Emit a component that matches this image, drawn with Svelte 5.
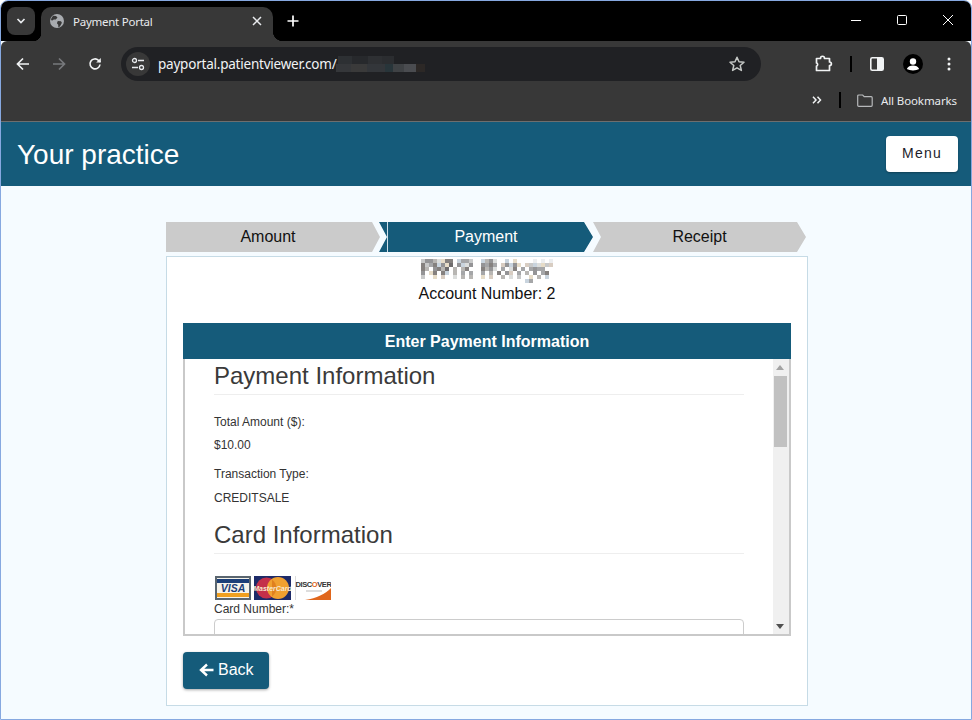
<script>
  const steps = [
    { label: 'Amount', cls: 'first' },
    { label: 'Payment', cls: 'mid on' },
    { label: 'Receipt', cls: 'last' }
  ];
  const urlBlur = [
    [2, 4, 14, 8, '#2d3033'], [16, 4, 16, 8, '#27292c'], [32, 4, 14, 8, '#2e3033'], [46, 4, 12, 8, '#2b2d30'],
    [0, 12, 15, 8, '#35373a'], [15, 12, 16, 8, '#3a3a3a'], [31, 12, 18, 8, '#33363a'], [49, 12, 8, 8, '#28353a'],
    [57, 12, 11, 8, '#3f4245'], [68, 12, 12, 8, '#4a4c50'], [80, 12, 9, 8, '#2c2826']
  ];
  const greys = { '1': '#eceef0', '2': '#dcdedd', '3': '#c8c9c9', '4': '#b8b6b3', '5': '#a5a6a8', '6': '#949496', '7': '#85817f', '8': '#6f6d6e' };
  const tints = ['', '#e6dcc8', '', '#c9d4de', '', '#d8cdc2'];
  const rows = [
    '36642377 3553  3462  2 2    1 1 1',
    '73573628 6226  6575 36363 2332232',
    '74 6748 4 47   7462 5 27 5 5655  ',
    '6 37 73 4 5 5  5 4 7 62 5 4 6 57 ',
    '3  3 2  2 4 4  3 2  4 2 3  2 4 2 ',
    '                          25      '
  ];
  const nameCells = [];
  rows.forEach((row, y) => {
    [...row].forEach((c, x) => {
      if (greys[c]) {
        const t = tints[(x * 5 + y * 7) % tints.length];
        nameCells.push({ x: x * 4, y: y * 4, fill: t && Number(c) < 4 ? t : greys[c] });
      }
    });
  });
</script>

<div class="frame">
  <div class="tabstrip">
    <div class="tabsearch">
      <svg width="10" height="6" viewBox="0 0 10 6"><path d="M1.500 1l3.500 3.500L8.500 1" fill="none" stroke="#e8eaed" stroke-width="1.700"/></svg>
    </div>
    <div class="tab">
      <svg class="globe" width="14" height="14" viewBox="0 0 14 14"><circle cx="7" cy="7" r="7" fill="#a8abaf"/><path d="M3 1.800l3 .2 1.500 1.600-1.700 1.800-2 .1-1.900 1.300-1-1.500zM7.800 7l3.200.3.900 1.400-2 3.800-1.600.7-.1-2.500-1.300-1.500z" fill="#383838"/></svg>
      <span class="tabtitle">Payment Portal</span>
      <svg class="tabx" width="10" height="10" viewBox="0 0 10 10"><path d="M1 1l8 8M9 1l-8 8" stroke="#e8eaed" stroke-width="1.500"/></svg>
    </div>
    <svg class="newtab" width="12" height="12" viewBox="0 0 12 12"><path d="M6 .5v11M.5 6h11" stroke="#fff" stroke-width="1.700"/></svg>
    <div class="winctl">
      <svg width="12" height="12" viewBox="0 0 12 12"><path d="M1 6.500h10" stroke="#fff"/></svg>
      <svg width="12" height="12" viewBox="0 0 12 12"><rect x="1.500" y="1.500" width="9" height="9" rx="1" fill="none" stroke="#fff"/></svg>
      <svg width="12" height="12" viewBox="0 0 12 12"><path d="M1 1l10 10M11 1L1 11" stroke="#fff"/></svg>
    </div>
  </div>

  <div class="toolbar">
    <div class="navrow">
      <div class="navicons">
        <svg width="14" height="14" viewBox="0 0 14 14"><path d="M13 7H2M7 1.500L1.500 7 7 12.500" fill="none" stroke="#f1f3f4" stroke-width="1.700"/></svg>
        <svg width="14" height="14" viewBox="0 0 14 14"><path d="M1 7h11M7 1.500L12.500 7 7 12.500" fill="none" stroke="#77797c" stroke-width="1.700"/></svg>
        <svg width="14" height="14" viewBox="0 0 14 14"><path d="M12 7.500A5 5 0 1 1 10.500 3.300L12.300 5" fill="none" stroke="#f1f3f4" stroke-width="1.600"/><path d="M12.800 1v4.600H8.200z" fill="#f1f3f4"/></svg>
      </div>
      <div class="omnibox">
        <div class="siteinfo">
          <svg width="14" height="14" viewBox="0 0 14 14"><circle cx="3.500" cy="3.500" r="2" fill="none" stroke="#e8eaed" stroke-width="1.300"/><path d="M7 3.500h6M1 10.500h6" stroke="#e8eaed" stroke-width="1.400"/><circle cx="10.500" cy="10.500" r="2" fill="none" stroke="#e8eaed" stroke-width="1.300"/></svg>
        </div>
        <span class="url">payportal.patientviewer.com/</span>
        <svg class="urlblur" width="90" height="24" viewBox="0 0 90 24">
          {#each urlBlur as b}<rect x={b[0]} y={b[1]} width={b[2]} height={b[3]} fill={b[4]}/>{/each}
        </svg>
        <svg class="star" width="18" height="18" viewBox="0 0 18 18"><path d="M9 2.200l2 4.600 5 .4-3.800 3.300 1.200 4.900L9 12.800l-4.400 2.600 1.200-4.900L2 7.200l5-.4z" fill="none" stroke="#c4c7c5" stroke-width="1.500" stroke-linejoin="round"/></svg>
      </div>
      <div class="actions">
        <svg width="18" height="18" viewBox="0 0 18 18"><path d="M2 4h4c0-3 4-3 4 0h5v3.500c2.500 0 2.500 3.500 0 3.500v5H2v-4.500c1.500 0 1.500-3 0-3z" transform="translate(-.5 -.5)" fill="none" stroke="#f1f3f4" stroke-width="1.700" stroke-linejoin="round"/></svg>
        <span class="sep"></span>
        <svg width="14" height="14" viewBox="0 0 14 14"><rect x=".8" y=".8" width="12.400" height="12.400" rx="1.500" fill="none" stroke="#f1f3f4" stroke-width="1.600"/><rect x="7" y="1" width="6" height="12" fill="#f1f3f4"/></svg>
        <svg class="avatar" width="20" height="20" viewBox="0 0 20 20"><circle cx="10" cy="10" r="10" fill="#000"/><circle cx="10" cy="7.500" r="3.200" fill="#fff"/><path d="M3.800 15c1-2.600 3.600-3.600 6.200-3.600s5.200 1 6.200 3.600c-3 1.900-9.400 1.900-12.400 0z" fill="#fff"/></svg>
        <svg class="dots" width="4" height="14" viewBox="0 0 4 14"><circle cx="2" cy="2" r="1.500" fill="#f1f3f4"/><circle cx="2" cy="7" r="1.500" fill="#f1f3f4"/><circle cx="2" cy="12" r="1.500" fill="#f1f3f4"/></svg>
      </div>
    </div>
    <div class="bookrow">
      <svg width="10" height="8" viewBox="0 0 10 8"><path d="M1 .8L4 4 1 7.200M5.500 .8L8.500 4 5.500 7.200" fill="none" stroke="#f1f3f4" stroke-width="1.500"/></svg>
      <span class="booksep"></span>
      <svg class="folder" width="16" height="13" viewBox="0 0 16 13"><path d="M.7 2a1 1 0 0 1 1-1h4l1.500 1.700h7a1 1 0 0 1 1 1v7.600a1 1 0 0 1-1 1H1.700a1 1 0 0 1-1-1z" fill="none" stroke="#b6b8ba" stroke-width="1.200"/></svg>
      <span class="booktext">All Bookmarks</span>
    </div>
  </div>

  <header class="apphead">
    <h1>Your practice</h1>
    <button class="menu">Menu</button>
  </header>

  <main class="page">
    <div class="steps">
      {#each steps as s}
        <div class="step {s.cls}">{s.label}</div>
      {/each}
    </div>
    <section class="card">
      <svg class="name" width="134" height="24" viewBox="0 0 134 24">
        {#each nameCells as c}<rect x={c.x} y={c.y} width="4" height="4" fill={c.fill}/>{/each}
      </svg>
      <div class="acct">Account Number: 2</div>
      <div class="panelhead">Enter Payment Information</div>
      <div class="panel">
        <div class="scrollarea">
          <h2 class="h-first">Payment Information</h2>
          <div class="lbl l1">Total Amount ($):</div>
          <div class="val">$10.00</div>
          <div class="lbl l2">Transaction Type:</div>
          <div class="val v2">CREDITSALE</div>
          <h2 class="h-second">Card Information</h2>
          <div class="cards">
            <svg class="cvisa" width="36" height="24" viewBox="0 0 36 24">
              <rect width="36" height="24" fill="#5a6670"/><rect x="2" y="2" width="32" height="20" fill="#f6f3ea"/><rect x="2" y="3" width="32" height="4" fill="#1c3f78"/><rect x="2" y="17" width="32" height="4" fill="#f0a020"/>
              <text x="18" y="15.500" text-anchor="middle" class="visa">VISA</text>
            </svg>
            <svg width="37" height="24" viewBox="0 0 37 24">
              <rect width="37" height="24" fill="#1d2a68"/><circle cx="12.500" cy="12" r="10.500" fill="#c4304a"/><circle cx="24" cy="12" r="11" fill="#f0a030"/><path d="M18 3.500a10.500 10.500 0 0 1 0 17" fill="#e0801f"/>
              <text x="18.500" y="14.500" text-anchor="middle" class="mc">MasterCard</text>
            </svg>
            <svg class="disc" width="36" height="24" viewBox="0 0 36 24">
              <rect width="36" height="24" fill="#fff"/><path d="M36 12v12H10C22 22 30 18 36 12z" fill="#e0661c"/><path d="M.5 0v24" stroke="#ddd"/><path d="M11 15h16" stroke="#bbb"/>
              <text x="18.500" y="11" text-anchor="middle" class="dv">DISC<tspan fill="#e0661c">O</tspan>VER</text>
            </svg>
          </div>
          <div class="lbl l3">Card Number:*</div>
          <div class="field"></div>
        </div>
        <div class="sbar">
          <svg class="up" width="8" height="5" viewBox="0 0 8 5"><path d="M4 0l4 5H0z" fill="#a3a3a3"/></svg>
          <div class="thumb"></div>
          <svg class="down" width="8" height="5" viewBox="0 0 8 5"><path d="M0 0h8L4 5z" fill="#505050"/></svg>
        </div>
      </div>
      <button class="back">
        <svg width="15" height="14" viewBox="0 0 15 14"><path d="M14.500 7H2.500M8 1.500L2 7l6 5.500" fill="none" stroke="#fff" stroke-width="2.400"/></svg>
        Back
      </button>
    </section>
  </main>
</div>

<style>
  :global(body) { margin: 0; background: #fff; }
  .frame {
    width: 972px; height: 720px; box-sizing: border-box; overflow: hidden;
    border: 1px solid #86a8e0; border-radius: 8px 8px 0 0;
    display: flex; flex-direction: column; background: #f5fbff;
    font-family: "Liberation Sans", Arial, sans-serif;
  }
  .tabstrip { height: 40px; flex: none; background: #000; display: flex; align-items: flex-end; position: relative; }
  .tabsearch {
    width: 28px; height: 28px; border-radius: 8px; background: #383838; margin: 0 6px 6px 6px;
    display: flex; align-items: center; justify-content: center; flex: none;
  }
  .tab {
    width: 232px; height: 34px; background: #383838; border-radius: 10px 10px 0 0; flex: none;
    display: flex; align-items: center; box-sizing: border-box; padding: 0 11px 6px 9px; position: relative;
  }
  .tab::after {
    content: ""; position: absolute; right: -10px; bottom: 0; width: 10px; height: 10px;
    background: radial-gradient(circle at 100% 0, #000 10px, #383838 10.500px);
  }
  .tab::before {
    content: ""; position: absolute; left: -8px; bottom: 0; width: 8px; height: 8px;
    background: radial-gradient(circle at 0 0, #000 8px, #383838 8.500px);
  }
  .tabtitle { font: 11.500px/16px "Noto Sans", sans-serif; letter-spacing: -.25px; color: #e8eaed; margin: 1px 0 0 9px; flex: 1; }
  .newtab { margin: 0 0 14px 14px; flex: none; }
  .winctl { margin-left: auto; display: flex; gap: 34px; padding: 0 17px 15px 0; }
  .toolbar { height: 80px; flex: none; background: #383838; border-bottom: 1px solid #6e6e6e; display: flex; flex-direction: column; border-top-left-radius: 6px; border-top-right-radius: 6px; }
  .navrow { height: 46px; display: flex; align-items: flex-start; padding-top: 6px; box-sizing: border-box; }
  .navicons { display: flex; gap: 22px; align-items: center; height: 34px; padding-left: 15px; width: 105px; box-sizing: border-box; flex: none; margin-right: 15px; }
  .omnibox { width: 640px; height: 34px; background: #202124; border-radius: 17px; display: flex; align-items: center; position: relative; flex: none; }
  .siteinfo { width: 24px; height: 24px; border-radius: 12px; background: #383838; margin-left: 5px; display: flex; align-items: center; justify-content: center; flex: none; }
  .url { font: 13.500px "Noto Sans", sans-serif; letter-spacing: -.22px; color: #f1f3f4; margin-left: 8px; }
  .urlblur { margin-left: -1px; flex: none; }
  .star { position: absolute; right: 15px; top: 8px; }
  .actions { display: flex; align-items: center; height: 34px; margin-left: 54px; }
  .sep { width: 2px; height: 16px; background: #000; margin: 0 18px 0 17px; }
  .avatar { margin-left: 19px; }
  .dots { margin-left: 24px; }
  .bookrow { height: 33px; display: flex; align-items: center; justify-content: flex-end; padding: 0 14px 5px 0; }
  .booksep { width: 2px; height: 16px; background: #000; margin: 0 16px 0 17px; }
  .booktext { font: 11.500px "Noto Sans", sans-serif; letter-spacing: -.1px; color: #e8eaed; margin-left: 8px; }
  .apphead { height: 64px; flex: none; background: #155b7a; display: flex; align-items: center; justify-content: space-between; padding: 0 13px 0 16px; }
  .apphead h1 { margin: 2px 0 0; font-weight: 400; font-size: 28px; color: #fff; }
  .menu {
    width: 72px; height: 36px; background: #fff; border: 0; border-radius: 4px; color: #1c1c2a;
    font: 14px "Liberation Sans", sans-serif; letter-spacing: 1.200px; box-shadow: 0 1px 2px rgba(0,0,0,.3); padding: 0 0 2px;
  }
  .page { flex: 1; padding: 36px 163px 0 165px; display: flex; flex-direction: column; min-height: 0; }
  .steps { display: flex; height: 30px; width: 640px; margin-bottom: 4px; flex: none; }
  .step { height: 30px; background: #cbcbcb; color: #111; font-size: 16px; line-height: 29px; text-align: center; flex: none; }
  .step.first { width: 214px; margin-right: -1px; padding-right: 10px; box-sizing: border-box; clip-path: polygon(0 0, 206px 0, 100% 50%, 206px 100%, 0 100%); }
  .step.mid { width: 214px; background: #155b7a; color: #fff; clip-path: polygon(0 0, 205px 0, 100% 50%, 205px 100%, 0 100%, 8px 50%); position: relative; }
  .step.mid::before { content: ""; position: absolute; left: 8px; top: 0; bottom: 0; width: 1px; background: #cfe0ea; }
  .step.last { width: 213px; clip-path: polygon(0 0, 204px 0, 100% 50%, 204px 100%, 0 100%, 8px 50%); }
  .card {
    width: 642px; height: 450px; box-sizing: border-box; border: 1px solid #c6dbe6; background: #fff; flex: none;
    padding: 0 16px; text-align: center;
  }
  .name { display: block; margin: 2px 0 -4px 238px; }
  .acct { font-size: 16px; color: #111; line-height: 18px; margin-top: 6px; }
  .panelhead { height: 36px; line-height: 38px; margin-top: 20px; background: #155b7a; color: #fff; font-weight: 700; font-size: 16px; }
  .panel {
    height: 277px; box-sizing: border-box; border: solid #c9c9c9; border-width: 0 2px 2px 2px;
    display: flex; overflow: hidden; text-align: left; color: #333;
  }
  .scrollarea { flex: 1; padding: 0 29px; overflow: hidden; min-width: 0; }
  h2 { margin: 0; font-weight: 400; font-size: 24px; color: #3a3a3a; line-height: 28px; border-bottom: 1px solid #eee; }
  .h-first { padding: 3px 0 4px; }
  .h-second { margin-top: 16px; padding-bottom: 4px; }
  .lbl { font-size: 12px; color: #333; line-height: 14px; }
  .l1 { margin-top: 20px; }
  .l2 { margin-top: 15px; }
  .val { font-size: 12px; line-height: 14px; color: #333; margin-top: 9px; }
  .val.v2 { margin-top: 10px; }
  .cards { display: flex; gap: 3px; margin-top: 22px; height: 24px; filter: blur(.3px); }
  .cvisa { margin-left: 1px; }
  .disc { margin-left: 1px; }
  .l3 { margin-top: 2px; }
  .field { height: 40px; border: 1px solid #ccc; border-radius: 4px; margin-top: 3px; background: #fff; }
  .sbar { width: 16px; flex: none; background: #f0f0f0; display: flex; flex-direction: column; align-items: flex-start; padding: 6px 0 0 1px; box-sizing: border-box; position: relative; }
  .up { margin-left: 2px; }
  .thumb { width: 13px; height: 71px; background: #c1c1c1; margin-top: 6px; }
  .down { position: absolute; bottom: 5px; left: 3px; }
  .visa { font: italic 700 10.500px "Liberation Sans", sans-serif; fill: #1c3f78; }
  .mc { font: italic 700 7px "Liberation Sans", sans-serif; fill: #f8e8d0; }
  .dv { font: 700 7.500px "Liberation Sans", sans-serif; fill: #333; letter-spacing: -.4px; }
  .back {
    display: flex; align-items: center; gap: 4px; margin-top: 16px; height: 37px; width: 86px; padding: 0 0 2px 16px; box-sizing: border-box;
    background: #155b7a; color: #fff; border: 0; border-radius: 4px; box-shadow: 0 1px 3px rgba(0,0,0,.35);
    font: 16px "Liberation Sans", sans-serif;
  }
</style>
